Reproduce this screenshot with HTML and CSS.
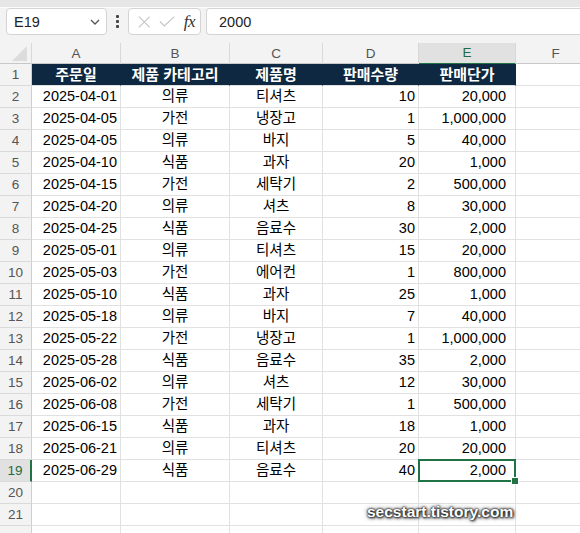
FILE: index.html
```html
<!DOCTYPE html>
<html lang="ko">
<head>
<meta charset="utf-8">
<link rel="stylesheet" href="styles.css">
</head>
<body>
<div class="topstrip"></div>
<div class="fbar">
  <div class="namebox"><span>E19</span>
    <svg class="chev" width="10" height="6" viewBox="0 0 10 6"><path d="M1 1 L5 5 L9 1" fill="none" stroke="#555" stroke-width="1.3"/></svg>
  </div>
  <div class="dots"><i></i><i></i><i></i></div>
  <div class="fxbox">
    <svg width="14" height="14" viewBox="0 0 14 14"><path d="M1 1 L13 13 M13 1 L1 13" stroke="#c4c4c4" stroke-width="1.2" fill="none"/></svg>
    <svg width="18" height="13" viewBox="0 0 18 13"><path d="M1 6.5 L6 11.5 L17 1" stroke="#c4c4c4" stroke-width="1.2" fill="none"/></svg>
    <span class="fx">fx</span>
  </div>
  <div class="finput">2000</div>
</div>
<div class="sheet">
  <div class="colhead">
    <div class="corner"><svg width="15" height="15" viewBox="0 0 15 15"><path d="M15 0 L15 15 L0 15 Z" fill="#dcdcdc"/></svg></div>
    <div class="ch">A</div><div class="ch">B</div><div class="ch">C</div><div class="ch">D</div><div class="ch sel">E</div><div class="ch">F</div>
  </div>
  <div class="row hdr"><div class="rh">1</div><div class="c">주문일</div><div class="c">제품 카테고리</div><div class="c">제품명</div><div class="c">판매수량</div><div class="c">판매단가</div><div class="c blank"></div></div>
  <div class="row"><div class="rh">2</div><div class="c r">2025-04-01</div><div class="c m">의류</div><div class="c m">티셔츠</div><div class="c r">10</div><div class="c r2">20,000</div><div class="c"></div></div>
  <div class="row"><div class="rh">3</div><div class="c r">2025-04-05</div><div class="c m">가전</div><div class="c m">냉장고</div><div class="c r">1</div><div class="c r2">1,000,000</div><div class="c"></div></div>
  <div class="row"><div class="rh">4</div><div class="c r">2025-04-05</div><div class="c m">의류</div><div class="c m">바지</div><div class="c r">5</div><div class="c r2">40,000</div><div class="c"></div></div>
  <div class="row"><div class="rh">5</div><div class="c r">2025-04-10</div><div class="c m">식품</div><div class="c m">과자</div><div class="c r">20</div><div class="c r2">1,000</div><div class="c"></div></div>
  <div class="row"><div class="rh">6</div><div class="c r">2025-04-15</div><div class="c m">가전</div><div class="c m">세탁기</div><div class="c r">2</div><div class="c r2">500,000</div><div class="c"></div></div>
  <div class="row"><div class="rh">7</div><div class="c r">2025-04-20</div><div class="c m">의류</div><div class="c m">셔츠</div><div class="c r">8</div><div class="c r2">30,000</div><div class="c"></div></div>
  <div class="row"><div class="rh">8</div><div class="c r">2025-04-25</div><div class="c m">식품</div><div class="c m">음료수</div><div class="c r">30</div><div class="c r2">2,000</div><div class="c"></div></div>
  <div class="row"><div class="rh">9</div><div class="c r">2025-05-01</div><div class="c m">의류</div><div class="c m">티셔츠</div><div class="c r">15</div><div class="c r2">20,000</div><div class="c"></div></div>
  <div class="row"><div class="rh">10</div><div class="c r">2025-05-03</div><div class="c m">가전</div><div class="c m">에어컨</div><div class="c r">1</div><div class="c r2">800,000</div><div class="c"></div></div>
  <div class="row"><div class="rh">11</div><div class="c r">2025-05-10</div><div class="c m">식품</div><div class="c m">과자</div><div class="c r">25</div><div class="c r2">1,000</div><div class="c"></div></div>
  <div class="row"><div class="rh">12</div><div class="c r">2025-05-18</div><div class="c m">의류</div><div class="c m">바지</div><div class="c r">7</div><div class="c r2">40,000</div><div class="c"></div></div>
  <div class="row"><div class="rh">13</div><div class="c r">2025-05-22</div><div class="c m">가전</div><div class="c m">냉장고</div><div class="c r">1</div><div class="c r2">1,000,000</div><div class="c"></div></div>
  <div class="row"><div class="rh">14</div><div class="c r">2025-05-28</div><div class="c m">식품</div><div class="c m">음료수</div><div class="c r">35</div><div class="c r2">2,000</div><div class="c"></div></div>
  <div class="row"><div class="rh">15</div><div class="c r">2025-06-02</div><div class="c m">의류</div><div class="c m">셔츠</div><div class="c r">12</div><div class="c r2">30,000</div><div class="c"></div></div>
  <div class="row"><div class="rh">16</div><div class="c r">2025-06-08</div><div class="c m">가전</div><div class="c m">세탁기</div><div class="c r">1</div><div class="c r2">500,000</div><div class="c"></div></div>
  <div class="row"><div class="rh">17</div><div class="c r">2025-06-15</div><div class="c m">식품</div><div class="c m">과자</div><div class="c r">18</div><div class="c r2">1,000</div><div class="c"></div></div>
  <div class="row"><div class="rh">18</div><div class="c r">2025-06-21</div><div class="c m">의류</div><div class="c m">티셔츠</div><div class="c r">20</div><div class="c r2">20,000</div><div class="c"></div></div>
  <div class="row"><div class="rh selrow">19</div><div class="c r">2025-06-29</div><div class="c m">식품</div><div class="c m">음료수</div><div class="c r">40</div><div class="c r2 active">2,000<span class="handle"></span></div><div class="c"></div></div>
  <div class="row"><div class="rh">20</div><div class="c"></div><div class="c"></div><div class="c"></div><div class="c"></div><div class="c"></div><div class="c"></div></div>
  <div class="row"><div class="rh">21</div><div class="c"></div><div class="c"></div><div class="c"></div><div class="c"></div><div class="c"></div><div class="c"></div></div>
  <div class="row"><div class="rh"></div><div class="c"></div><div class="c"></div><div class="c"></div><div class="c"></div><div class="c"></div><div class="c"></div></div>
  <div class="watermark">secstart.tistory.com</div>
</div>
</body>
</html>
```

FILE: styles.css
```css
html, body {
  margin: 0;
  padding: 0;
  background: #f3f3f3;
  overflow: hidden;
}
body {
  width: 580px;
  height: 533px;
  font-family: "Liberation Sans", "Noto Sans CJK KR", sans-serif;
  color: #000;
}
.topstrip {
  height: 7px;
  background: #e6e6e6;
  border-bottom: 1px solid #fbfbfb;
}
.fbar {
  height: 32px;
  display: flex;
  align-items: flex-start;
  padding-left: 6px;
  box-sizing: border-box;
}
.namebox, .fxbox, .finput {
  height: 27px;
  box-sizing: border-box;
  background: #fff;
  border: 1px solid #d4d4d4;
  border-radius: 4px;
  display: flex;
  align-items: center;
}
.namebox {
  width: 101px;
  padding: 0 6px 0 7px;
  justify-content: space-between;
  font-size: 14.5px;
  color: #222;
}
.chev { margin-top: 1px; }
.dots {
  width: 21px;
  height: 27px;
  display: flex;
  flex-direction: column;
  align-items: center;
  justify-content: center;
  gap: 2.5px;
}
.dots i {
  display: block;
  width: 2.5px;
  height: 2.5px;
  background: #444;
  border-radius: 1px;
}
.fxbox {
  width: 73px;
  padding: 0 5px 0 9px;
  gap: 8px;
}
.fx {
  font-family: "Liberation Serif", serif;
  font-style: italic;
  font-size: 17px;
  color: #333;
  margin-left: 1px;
  letter-spacing: -0.5px;
}
.finput {
  margin-left: 5px;
  flex: 1;
  border-right: none;
  border-radius: 4px 0 0 4px;
  padding-left: 12px;
  font-size: 14.5px;
  color: #222;
}
.sheet {
  position: relative;
  background: #fff;
}
.colhead, .row {
  display: grid;
  grid-template-columns: 32px 89px 109px 93px 96px 97px 80px;
}
.colhead {
  height: 24px;
  background: #f3f3f3;
  border-bottom: 1px solid #c8c8c8;
  box-sizing: border-box;
  padding-top: 3px;
}
.corner {
  border-right: 1px solid #d8d8d8;
  display: flex;
  align-items: flex-end;
  justify-content: flex-end;
  padding: 0 4px 3px 0;
  box-sizing: border-box;
}
.ch {
  border-right: 1px solid #d8d8d8;
  font-size: 13.5px;
  color: #555;
  text-align: center;
  line-height: 21px;
  box-sizing: border-box;
}
.ch.sel {
  background: #e1e1e1;
  color: #1e6b41;
  border-bottom: 2px solid #217346;
  line-height: 20px;
  margin-bottom: -1px;
}
.row {
  height: 22px;
}
.rh {
  background: #f3f3f3;
  border-right: 1px solid #cfcfcf;
  border-bottom: 1px solid #dadada;
  font-size: 13.5px;
  color: #555;
  text-align: center;
  line-height: 21px;
  box-sizing: border-box;
}
.rh.selrow {
  background: #e1e1e1;
  color: #1e6b41;
  border-right: 2px solid #217346;
}
.c {
  border-right: 1px solid #e1e1e1;
  border-bottom: 1px solid #e1e1e1;
  box-sizing: border-box;
  font-size: 14.5px;
  line-height: 21px;
  white-space: nowrap;
  overflow: visible;
}
.r { text-align: right; padding-right: 3px; }
.r2 { text-align: right; padding-right: 9px; }
.m { text-align: center; }
.hdr .c {
  background: #0e2841;
  border-right-color: #0e2841;
  color: #fff;
  font-weight: bold;
  text-align: center;
  font-size: 15px;
}
.hdr .c.blank {
  background: #fff;
  border-right-color: #e1e1e1;
}
.active {
  position: relative;
}
.active::before {
  content: "";
  position: absolute;
  left: -1px;
  top: -1px;
  right: -1px;
  bottom: -1px;
  border: 2px solid #217346;
}
.handle {
  position: absolute;
  right: -4px;
  bottom: -4px;
  width: 6px;
  height: 6px;
  background: #217346;
  border: 1px solid #fff;
}
.watermark {
  position: absolute;
  left: 367px;
  top: 463px;
  font-family: "Liberation Sans", sans-serif;
  font-weight: bold;
  font-size: 15.5px;
  color: #fff;
  text-shadow: 0 0 2px #222, 0 0 2px #222, 1px 1px 3px #111, 0 0 5px #444;
  white-space: nowrap;
}
```
